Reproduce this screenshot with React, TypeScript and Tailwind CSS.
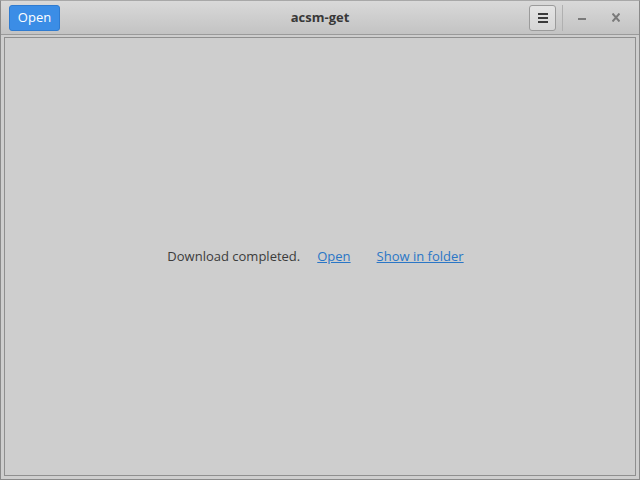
export default function App() {
  return (
    <div className="w-[640px] h-[480px] flex flex-col border border-[#8a8a8a] border-t-[#a8a8a8] bg-[#cecece] font-['Open_Sans',sans-serif] text-[13px]">
      {/* header bar */}
      <div className="h-[34px] shrink-0 grid grid-cols-[1fr_auto_1fr] items-center border-b border-[#9a9a9a] bg-gradient-to-b from-[#d9d9d9] to-[#c3c3c3] pl-[8px] pr-[8px]">
        <div className="flex items-center">
          <button className="h-[26px] w-[51px] rounded-[3px] border border-[#2f7bd0] bg-[#3b8de6] text-white text-[13px] leading-none">
            Open
          </button>
        </div>
        <div className="font-bold text-[#383838] text-[13px]">acsm-get</div>
        <div className="flex items-center justify-end">
          <button className="h-[26px] w-[27px] rounded-[3px] border border-[#9b9b9b] bg-gradient-to-b from-[#e4e4e4] to-[#d6d6d6] flex flex-col items-center justify-center gap-[2px]">
            <span className="block w-[10px] h-[2px] bg-[#3a3a3a]" />
            <span className="block w-[10px] h-[2px] bg-[#3a3a3a]" />
            <span className="block w-[10px] h-[2px] bg-[#3a3a3a]" />
          </button>
          <div className="ml-[6px] w-px h-[26px] bg-[#b0b0b0]" />
          <div className="w-[38px] flex justify-center">
            <span className="block w-[8px] h-[2px] bg-[#7a7a7a] mt-[2px]" />
          </div>
          <div className="w-[30px] flex justify-center">
            <svg width="8" height="9" viewBox="0 0 8 9">
              <path d="M0.5 0.5 L7.5 8.5 M7.5 0.5 L0.5 8.5" stroke="#7a7a7a" strokeWidth="2" />
            </svg>
          </div>
        </div>
      </div>

      {/* body */}
      <div className="flex-1 flex pt-[2px] px-[3px] pb-[3px]">
        <div className="flex-1 border border-[#8f8f8f] flex items-center justify-center pr-[9px] text-[#3c3c3c]">
          <span>Download completed.</span>
          <a className="ml-[17px] text-[#2a76c6] underline">Open</a>
          <a className="ml-[26px] text-[#2a76c6] underline">Show in folder</a>
        </div>
      </div>
    </div>
  );
}
